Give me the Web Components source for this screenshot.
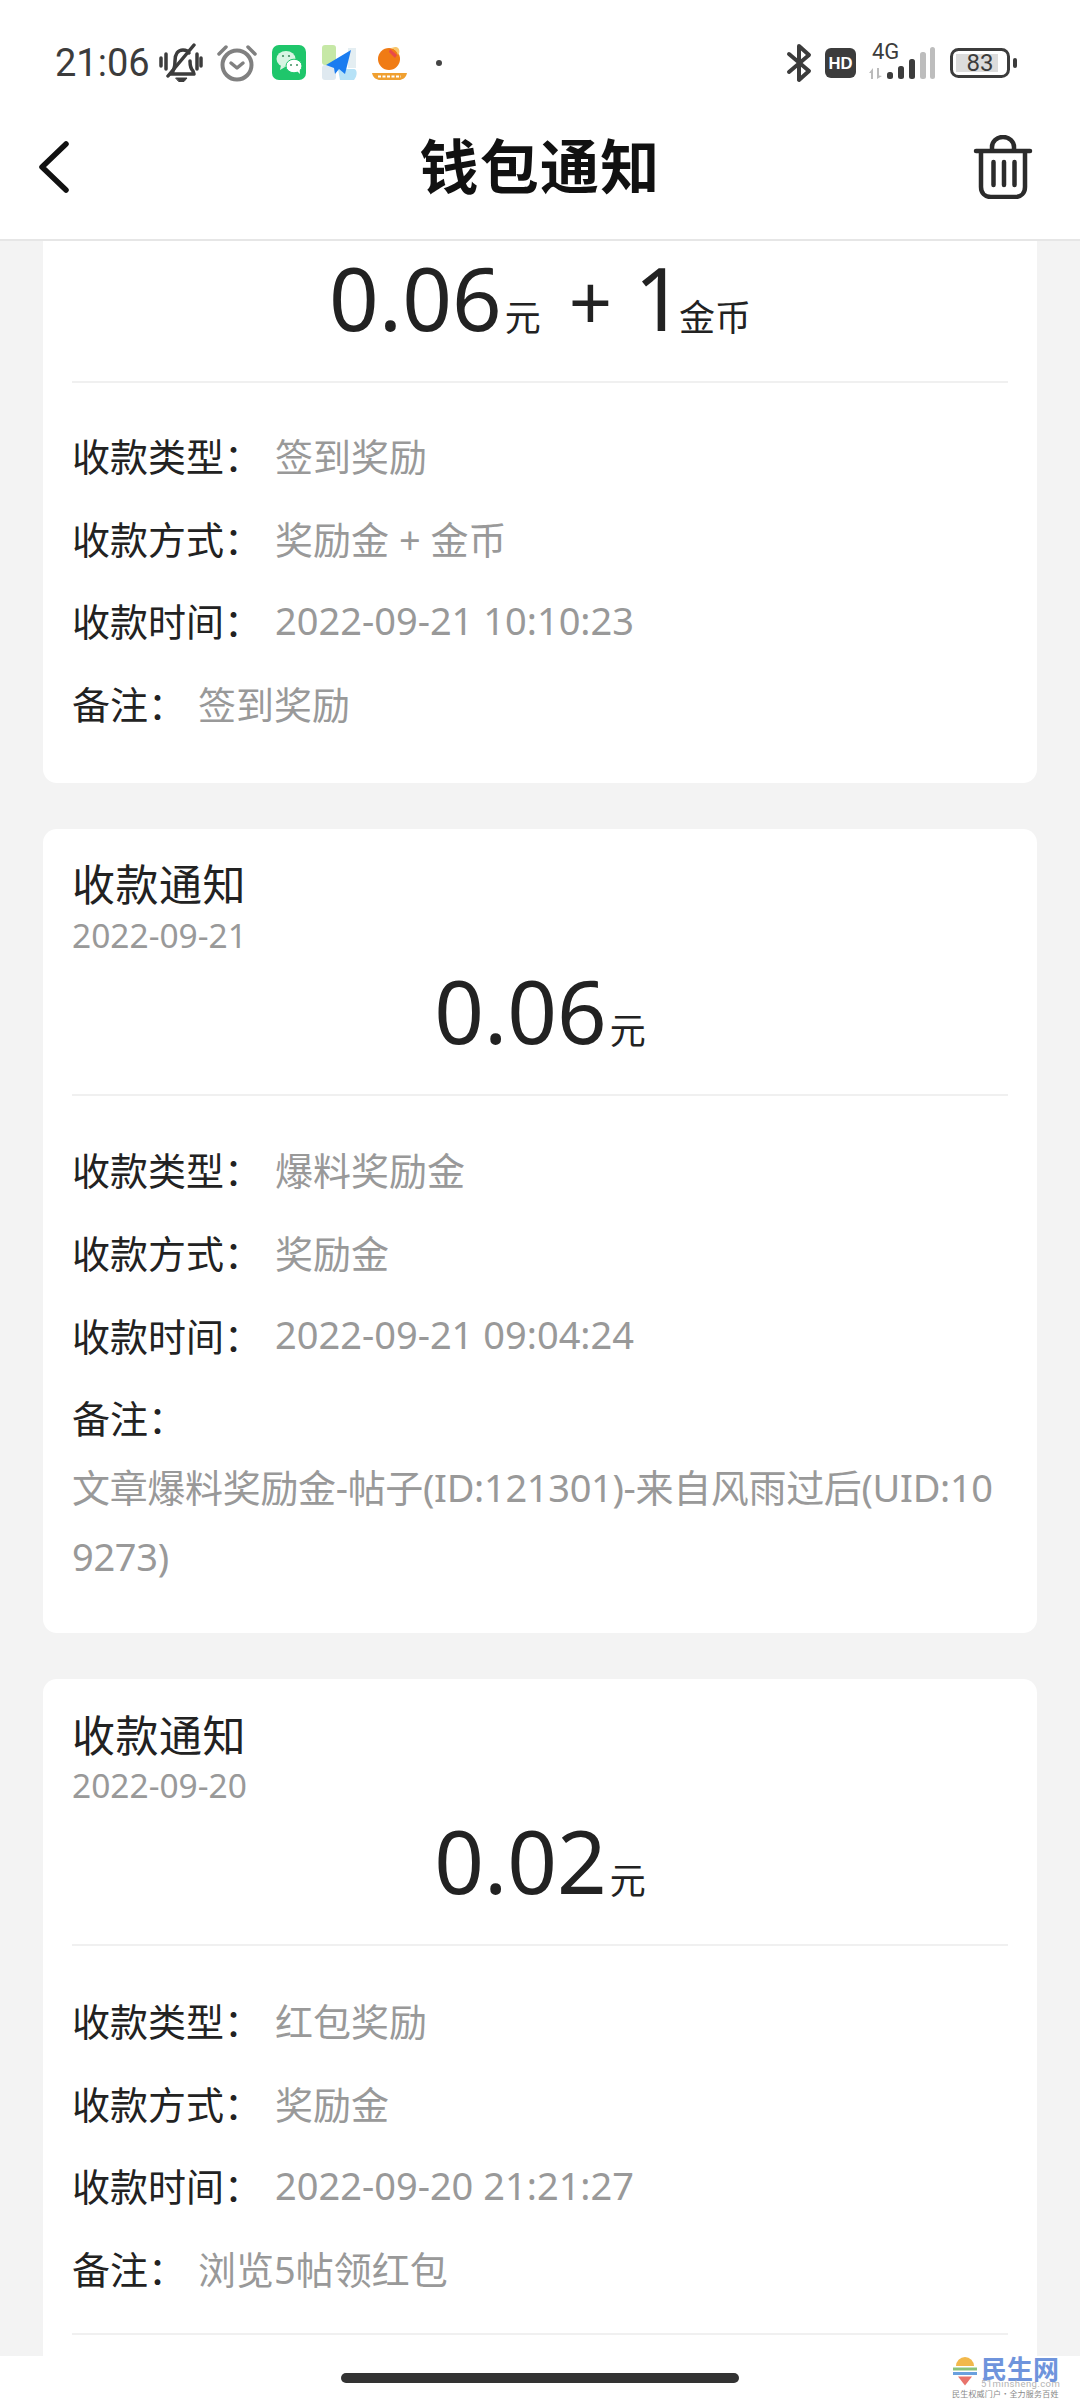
<!DOCTYPE html>
<html lang="zh">
<head>
<meta charset="utf-8">
<style>
  html, body { margin: 0; padding: 0; background: #fff; }
  body { width: 1080px; height: 2400px; overflow: hidden; display: flex; flex-direction: column;
    font-family: "Noto Sans", "Noto Sans CJK SC", sans-serif; }
  wallet-header { position: relative; z-index: 1; }
  wallet-list { flex: 1; min-height: 0; margin-top: -6px; }
</style>
</head>
<body>
<status-bar></status-bar>
<wallet-header title="钱包通知"></wallet-header>
<wallet-list>
  <wallet-card amount="0.06" coin="1" hide-head>
    <info-row label="收款类型" value="签到奖励"></info-row>
    <info-row label="收款方式" value="奖励金 + 金币"></info-row>
    <info-row label="收款时间" value="2022-09-21 10:10:23"></info-row>
    <info-row label="备注" value="签到奖励" short></info-row>
  </wallet-card>
  <wallet-card date="2022-09-21" amount="0.06">
    <info-row label="收款类型" value="爆料奖励金"></info-row>
    <info-row label="收款方式" value="奖励金"></info-row>
    <info-row label="收款时间" value="2022-09-21 09:04:24"></info-row>
    <info-row label="备注" short></info-row>
    <note-text>文章爆料奖励金-帖子(ID:121301)-来自风雨过后(UID:109273)</note-text>
  </wallet-card>
  <wallet-card date="2022-09-20" amount="0.02">
    <info-row label="收款类型" value="红包奖励"></info-row>
    <info-row label="收款方式" value="奖励金"></info-row>
    <info-row label="收款时间" value="2022-09-20 21:21:27"></info-row>
    <info-row label="备注" value="浏览5帖领红包" short></info-row>
    <card-divider></card-divider>
  </wallet-card>
</wallet-list>
<bottom-bar></bottom-bar>
<script>
class StatusBar extends HTMLElement {
  constructor() {
    super();
    this.attachShadow({ mode: 'open' }).innerHTML = `
      <style>
        :host { display: flex; align-items: center; height: 100px; box-sizing: border-box; padding: 25px 62px 0 55px; color: #3c3c3c; font-family: "Roboto", sans-serif; background: #fff; }
        .time { font-size: 38px; line-height: 40px; width: 104px; flex: none; }
        svg { display: block; flex: none; }
        .left { display: flex; align-items: center; }
        .right { display: flex; align-items: center; margin-left: auto; }
        .hd-t { font: 700 17px "Liberation Sans", sans-serif; fill: #fff; }
        .net { position: relative; width: 67px; height: 40px; margin-left: 12px; }
        .net span { position: absolute; left: 4px; top: -1px; font-size: 22px; line-height: 20px; }
        .net svg { position: absolute; left: 0; top: 0; }
        .bat { position: relative; width: 68px; height: 30px; margin-left: 15px; }
        .bat span { position: absolute; left: 0; top: 0; width: 60px; height: 30px; text-align: center; font-size: 24px; line-height: 31px; }
        .bat svg { position: absolute; left: 0; top: 0; }
      </style>
      <span class="time">21:06</span>
      <div class="left">
        <svg width="44" height="40" viewBox="0 0 44 40" fill="none" stroke="#3c3c3c" stroke-width="3.500" stroke-linecap="round" stroke-linejoin="round">
          <path d="M2 15v8M7 11v15M38 11v15M42 15v8"/>
          <path d="M12 31c3-3 4-7 4-13 0-7 3-11 8-11 3 0 5 1 6 3M31 18c0 5 1 8 3 10l1 3H12"/>
          <path d="M9 33 35 2"/>
          <path d="M17 35h11l-3 3.500h-5z" fill="#3c3c3c" stroke-width="1"/>
        </svg>
        <svg width="42" height="38" viewBox="0 0 42 38" fill="none" stroke="#808080" stroke-linecap="round" stroke-linejoin="round" style="margin-left:13px">
          <circle cx="21" cy="21" r="14.500" stroke-width="4"/>
          <path d="M15 19l6 5 6-5" stroke-width="3.500"/>
          <path d="M3 10l7-7M39 10l-7-7" stroke-width="3.500"/>
        </svg>
        <svg width="34" height="35" viewBox="0 0 34 35" style="margin-left:14px">
          <rect width="34" height="35" rx="7" fill="#1fc66b"/>
          <ellipse cx="14" cy="14" rx="9.500" ry="8" fill="#d8f5e3"/>
          <path d="M9 20l-1 5 5-3z" fill="#d8f5e3"/>
          <ellipse cx="22" cy="21" rx="8" ry="6.800" fill="#fff" stroke="#1fc66b"/>
          <path d="M25 26l3 3-.5-5z" fill="#fff"/>
          <g fill="#3f8f60"><circle cx="11" cy="11" r="1.100"/><circle cx="17" cy="11" r="1.100"/><circle cx="19" cy="20" r="1"/><circle cx="25" cy="20" r="1"/></g>
        </svg>
        <svg width="36" height="35" viewBox="0 0 36 35" style="margin-left:16px">
          <rect x="0" y="0" width="14" height="20" rx="3" fill="#c6e8a6"/>
          <rect x="0" y="20" width="14" height="15" rx="3" fill="#dfe9f0"/>
          <path d="M16 24h16c3 0 4 6 0 11H18z" fill="#b6e2f7"/>
          <path d="M26 3h8v20h-8z" fill="#e4eef2"/>
          <path d="M4 20 29 5l-6 24-6-5-4 5-1-6z" fill="#1a7cf0"/>
        </svg>
        <svg width="35" height="34" viewBox="0 0 35 34" style="margin-left:14px">
          <circle cx="17" cy="13" r="11" fill="#f07b14"/>
          <path d="M19 2a10 10 0 0 1 7 7c3-3 1-9-3-8z" fill="#f7c66b"/>
          <path d="M18 3l7 6-2 3-6-6z" fill="#e84a4a"/>
          <path d="M0 27h35c-1 5-5 7-8 7H8c-3 0-7-2-8-7z" fill="#f0a030"/>
          <path d="M6 30.500h23" stroke="#fff" stroke-width="2" stroke-dasharray="3 1.500"/>
        </svg>
        <svg width="6" height="6" viewBox="0 0 6 6" style="margin-left:29px"><circle cx="3" cy="3" r="3" fill="#444"/></svg>
      </div>
      <div class="right">
        <svg width="26" height="40" viewBox="0 0 26 40" fill="none" stroke="#3c3c3c" stroke-width="4" stroke-linecap="round" stroke-linejoin="round">
          <path d="M3 11l20 17-10 9V3l10 9L3 29"/>
        </svg>
        <svg width="31" height="30" viewBox="0 0 31 30" style="margin-left:13px">
          <rect width="31" height="30" rx="6" fill="#3c3c3c"/>
          <text class="hd-t" x="15.500" y="21" text-anchor="middle" textLength="24" lengthAdjust="spacingAndGlyphs">HD</text>
        </svg>
        <div class="net">
          <span>4G</span>
          <svg width="67" height="40" viewBox="0 0 67 40">
            <path d="M1 30l4-5v11H3v-6zM9 25h2v7.500l3 .5-5 3z" fill="#bbb"/>
            <rect x="19" y="29" width="6" height="7" rx="2.500" fill="#3c3c3c"/>
            <rect x="30" y="23" width="6" height="13" rx="2.500" fill="#3c3c3c"/>
            <rect x="41" y="16" width="6" height="20" rx="2.500" fill="#3c3c3c"/>
            <rect x="52" y="9" width="6" height="27" rx="2.500" fill="#bdbdbd"/>
            <rect x="62" y="4" width="5" height="32" rx="2.500" fill="#bdbdbd"/>
          </svg>
        </div>
        <div class="bat">
          <svg width="68" height="30" viewBox="0 0 68 30">
            <rect x="6" y="6" width="42" height="18" fill="#dcdcdc"/>
            <rect x="1.500" y="1.500" width="57" height="27" rx="7" fill="none" stroke="#3c3c3c" stroke-width="3"/>
            <rect x="63" y="10" width="4" height="10" rx="2" fill="#3c3c3c"/>
          </svg>
          <span>83</span>
        </div>
      </div>`;
  }
}
customElements.define('status-bar', StatusBar);

class WalletHeader extends HTMLElement {
  constructor() {
    super();
    this.attachShadow({ mode: 'open' }).innerHTML = `
      <style>
        :host { display: grid; grid-template-columns: 1fr auto 1fr; align-items: center; height: 141px; box-sizing: border-box; padding: 0 47px 5px; background: #fff; border-bottom: 2px solid #e6e6e6; }
        h1 { margin: -8px 0 0; font: 700 59px/1 "Noto Sans CJK SC", sans-serif; color: #111; letter-spacing: 1.300px; }
        svg { display: block; }
        .back { margin-left: -9px; }
        .del { justify-self: end; }
      </style>
      <svg class="back" width="32" height="52" viewBox="0 0 32 52" fill="none" stroke="#111" stroke-width="5.500" stroke-linecap="round" stroke-linejoin="round"><path d="M28 3 4 26l24 23"/></svg>
      <h1></h1>
      <svg class="del" width="60" height="64" viewBox="0 0 60 64" fill="none" stroke="#2b2b2b" stroke-width="4.500" stroke-linecap="round" stroke-linejoin="round">
        <path d="M3 16h54"/>
        <path d="M19 15v-3a11 10 0 0 1 22 0v3"/>
        <path d="M8 18v34c0 6 4 10 10 10h24c6 0 10-4 10-10V18"/>
        <path d="M20.500 27v23M31 27v23M41.500 27v23"/>
      </svg>`;
    this.shadowRoot.querySelector('h1').textContent = this.getAttribute('title');
  }
}
customElements.define('wallet-header', WalletHeader);

class WalletList extends HTMLElement {
  constructor() {
    super();
    this.attachShadow({ mode: 'open' }).innerHTML = `
      <style>
        :host { display: block; overflow: hidden; background: #f3f3f3; }
        .inner { display: flex; flex-direction: column; gap: 46px; padding: 0 43px; margin-top: -14px; }
      </style>
      <div class="inner"><slot></slot></div>`;
  }
}
customElements.define('wallet-list', WalletList);

class WalletCard extends HTMLElement {
  constructor() {
    super();
    this.attachShadow({ mode: 'open' }).innerHTML = `
      <style>
        :host { display: block; background: #fff; border-radius: 14px; padding: 0 29px 38.500px; font-family: "Noto Sans", "Noto Sans CJK SC", sans-serif; }
        .head { padding-top: 26.500px; }
        :host([hide-head]) .head { display: none; }
        :host([hide-head]) .amount { margin-top: 27px; }
        :host([hide-head]) .rows { padding-top: 30px; }
        .title { font: 400 43px/54px "Noto Sans CJK SC", sans-serif; color: #222; letter-spacing: .5px; }
        .date { font-size: 33.500px; line-height: 40px; color: #999; margin-top: 5.500px; }
        .amount { display: flex; justify-content: center; align-items: baseline; height: 98px; line-height: 98px; color: #222; font-size: 87px; margin-top: 6px; padding-bottom: 35px; border-bottom: 2px solid #f0f0f0; }
        .unit { font: 400 36px/1 "Noto Sans CJK SC", sans-serif; margin-left: 3px; }
        .plus { font-size: 76px; margin: 0 22px 0 28px; }
        .plus + span + .unit { margin-left: -5px; }
        .rows { padding-top: 31.500px; }
      </style>
      <div class="head"><div class="title">收款通知</div><div class="date"></div></div>
      <div class="amount"></div>
      <div class="rows"><slot></slot></div>`;
    const sr = this.shadowRoot;
    sr.querySelector('.date').textContent = this.getAttribute('date') || '';
    const amount = sr.querySelector('.amount');
    amount.innerHTML = `<span>${this.getAttribute('amount')}</span><span class="unit">元</span>`;
    if (this.hasAttribute('coin')) {
      amount.innerHTML += `<span class="plus">+</span><span>${this.getAttribute('coin')}</span><span class="unit">金币</span>`;
    }
  }
}
customElements.define('wallet-card', WalletCard);

class InfoRow extends HTMLElement {
  constructor() {
    super();
    this.attachShadow({ mode: 'open' }).innerHTML = `
      <style>
        :host { display: flex; height: 82.800px; align-items: center; font: 400 38px "Noto Sans", "Noto Sans CJK SC", sans-serif; }
        .label { color: #222; width: 203px; flex: none; white-space: pre; }
        :host([short]) .label { width: 126px; }
        .value { color: #999; white-space: pre; }
      </style>
      <span class="label"></span><span class="value"></span>`;
    this.shadowRoot.querySelector('.label').textContent = this.getAttribute('label') + '：';
    this.shadowRoot.querySelector('.value').textContent = this.getAttribute('value') || '';
  }
}
customElements.define('info-row', InfoRow);

class NoteText extends HTMLElement {
  constructor() {
    super();
    this.attachShadow({ mode: 'open' }).innerHTML = `
      <style>
        :host { display: block; color: #999; font: 400 38px/69px "Noto Sans", "Noto Sans CJK SC", sans-serif; letter-spacing: -.32px; word-break: break-all; margin: -5.500px 0 4px; }
      </style>
      <slot></slot>`;
  }
}
customElements.define('note-text', NoteText);

class CardDivider extends HTMLElement {
  constructor() {
    super();
    this.attachShadow({ mode: 'open' }).innerHTML = `
      <style>
        :host { display: block; height: 2px; margin-top: 24px; background: #f0f0f0; }
      </style>`;
  }
}
customElements.define('card-divider', CardDivider);

class BottomBar extends HTMLElement {
  constructor() {
    super();
    this.attachShadow({ mode: 'open' }).innerHTML = `
      <style>
        :host { display: flex; justify-content: center; position: relative; height: 44px; background: #fff; }
        .pill { width: 398px; height: 10px; margin-top: 17px; border-radius: 5px; background: #333; }
        wm-logo { position: absolute; left: 952px; top: 1px; }
      </style>
      <div class="pill"></div>
      <wm-logo></wm-logo>`;
  }
}
customElements.define('bottom-bar', BottomBar);

class WmLogo extends HTMLElement {
  constructor() {
    super();
    this.attachShadow({ mode: 'open' }).innerHTML = `
      <style>
        :host { display: block; width: 108px; }
        .top { display: flex; gap: 3px; height: 32px; }
        svg { flex: none; }
        .t { display: flex; flex-direction: column; }
        .a { font: 700 26px/22px "Noto Sans CJK SC", sans-serif; color: #6f94dc; white-space: nowrap; }
        .b { font: 400 9.500px/10px "Roboto", sans-serif; color: #b4b4b4; letter-spacing: .4px; white-space: nowrap; }
        .c { font: 400 8px/10px "Noto Sans CJK SC", sans-serif; color: #8a8a8a; white-space: nowrap; letter-spacing: .2px; }
      </style>
      <div class="top">
        <svg width="26" height="30" viewBox="0 0 26 30">
          <path d="M4 9a9 9 0 0 1 18 0z" fill="#f2b84b"/>
          <path d="M1 10.500h24v3H1z" fill="#8cc27a"/>
          <path d="M1 15h24v3H1z" fill="#6aa0de"/>
          <path d="M6 19.500h14l-7 9z" fill="#e8736b"/>
        </svg>
        <div class="t"><span class="a">民生网</span><span class="b">51minsheng.com</span></div>
      </div>
      <div class="c">民生权威门户·全力服务百姓</div>`;
  }
}
customElements.define('wm-logo', WmLogo);
</script>
</body>
</html>
